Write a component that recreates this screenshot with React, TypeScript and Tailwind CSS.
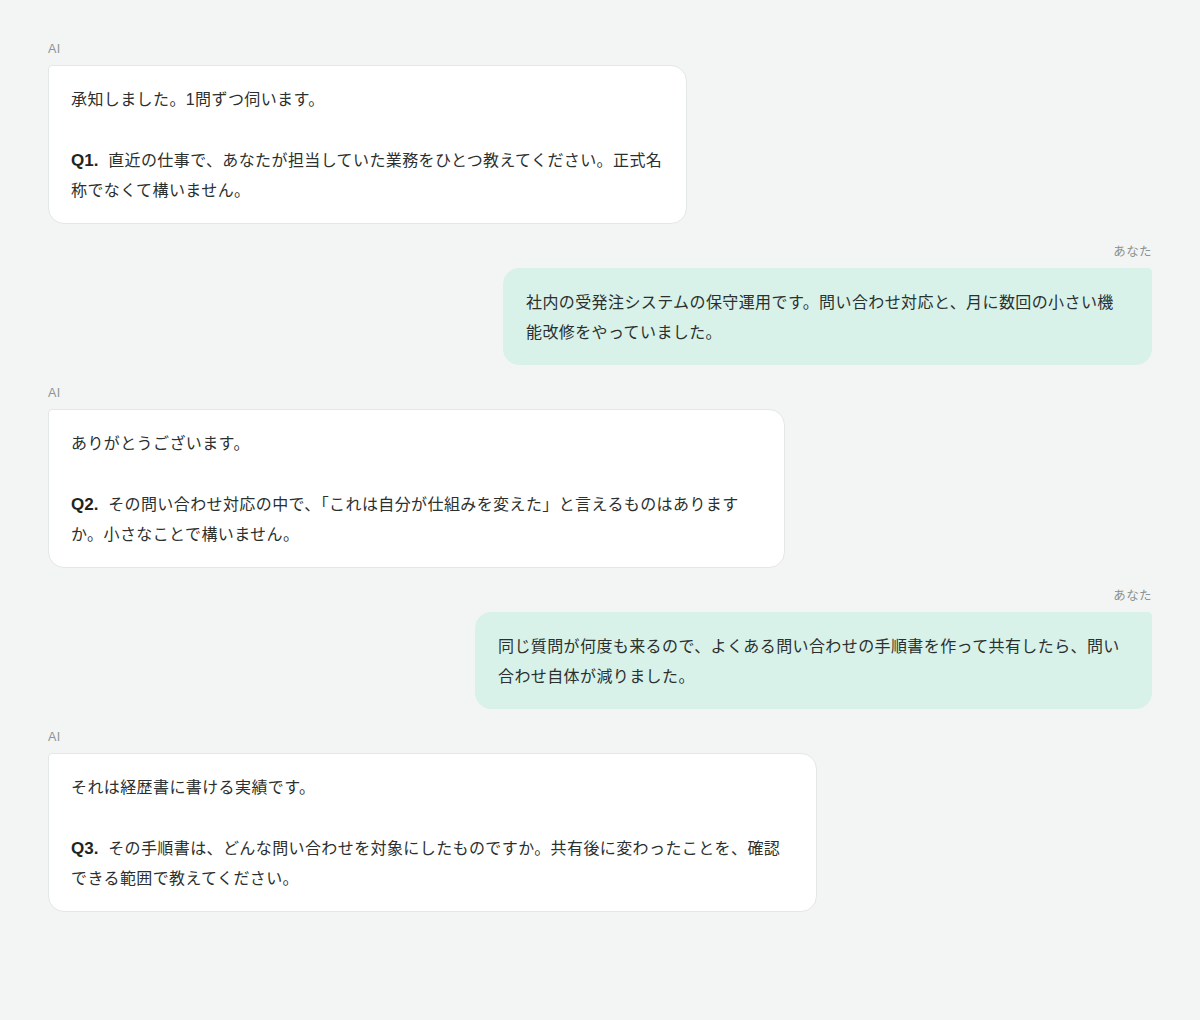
import React from 'react';

type Msg = {
  role: 'ai' | 'user';
  width: string;
  paras: { q?: string; lines: string[] }[];
};

const messages: Msg[] = [
  {
    role: 'ai',
    width: 'w-[639px]',
    paras: [
      { lines: ['承知しました。1問ずつ伺います。'] },
      { q: 'Q1.', lines: ['直近の仕事で、あなたが担当していた業務をひとつ教えてください。正式名', '称でなくて構いません。'] },
    ],
  },
  {
    role: 'user',
    width: 'w-[649px]',
    paras: [{ lines: ['社内の受発注システムの保守運用です。問い合わせ対応と、月に数回の小さい機', '能改修をやっていました。'] }],
  },
  {
    role: 'ai',
    width: 'w-[737px]',
    paras: [
      { lines: ['ありがとうございます。'] },
      { q: 'Q2.', lines: ['その問い合わせ対応の中で、「これは自分が仕組みを変えた」と言えるものはあります', 'か。小さなことで構いません。'] },
    ],
  },
  {
    role: 'user',
    width: 'w-[677px]',
    paras: [{ lines: ['同じ質問が何度も来るので、よくある問い合わせの手順書を作って共有したら、問い', '合わせ自体が減りました。'] }],
  },
  {
    role: 'ai',
    width: 'w-[769px]',
    paras: [
      { lines: ['それは経歴書に書ける実績です。'] },
      { q: 'Q3.', lines: ['その手順書は、どんな問い合わせを対象にしたものですか。共有後に変わったことを、確認', 'できる範囲で教えてください。'] },
    ],
  },
];

function Bubble({ msg }: { msg: Msg }) {
  const isAi = msg.role === 'ai';
  return (
    <div className={isAi ? 'flex flex-col items-start' : 'flex flex-col items-end'}>
      <div className="text-[12.5px] leading-4 tracking-[0.03em] text-[#8c9390] mb-2">{isAi ? 'AI' : 'あなた'}</div>
      <div
        className={
          isAi
            ? `${msg.width} bg-white border border-[#e3e7e5] rounded-2xl rounded-tl-[4px] px-[22px] pt-[19px] pb-[17px]`
            : `${msg.width} bg-[#d8f2e9] border border-[#d8f2e9] rounded-2xl rounded-tr-[4px] px-[22px] pt-[18.5px] pb-[16.5px]`
        }
      >
        {msg.paras.map((p, i) => (
          <p key={i} className={i > 0 ? 'mt-[31px]' : ''}>
            {p.q && (
              <span className="font-bold text-[17px] leading-none tracking-normal text-[#1f2422] mr-[5px]">{p.q} </span>
            )}
            {p.lines.map((l, j) => (
              <React.Fragment key={j}>
                {j > 0 && <br />}
                {l}
              </React.Fragment>
            ))}
          </p>
        ))}
      </div>
    </div>
  );
}

export default function App() {
  return (
    <div
      className="min-h-[1020px] bg-[#f3f5f4] px-12 pt-[41px] pb-10 text-[16px] leading-[30px] tracking-[0.025em] text-[#2b302e]"
      style={{ fontFamily: '"Liberation Sans", "Noto Sans CJK JP", sans-serif' }}
    >
      <div className="flex flex-col gap-5">
        {messages.map((m, i) => (
          <Bubble key={i} msg={m} />
        ))}
      </div>
    </div>
  );
}
